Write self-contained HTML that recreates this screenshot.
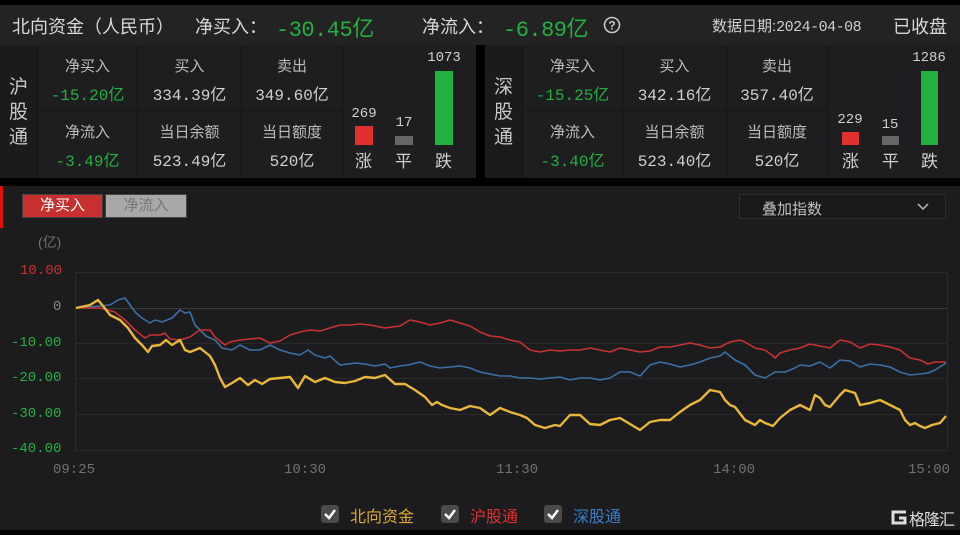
<!DOCTYPE html>
<html><head><meta charset="utf-8">
<style>
*{margin:0;padding:0;box-sizing:border-box}
body{width:960px;height:535px;background:#000;position:relative;overflow:hidden;font-family:"Liberation Sans","Noto Sans CJK SC",sans-serif;color:#c8c8c8}
.a{position:absolute;white-space:nowrap}
.hdr{left:0;top:5px;width:960px;height:40px;background:#232323}
.pn{top:45px;height:133px;background:#1e1e20}
.cell{position:absolute;width:100px;height:66px;border-right:1px solid #151515;border-bottom:1px solid #151515;text-align:center;font-size:15px}
.cell .l{position:absolute;top:10px;left:0;right:0;color:#bdbdbd}
.cell .v{position:absolute;top:36px;left:0;right:0;color:#d0d0d0;font-family:"Liberation Mono","Noto Sans CJK SC",monospace;font-size:16px;letter-spacing:0}
.g{color:#22b040 !important}
.lab{position:absolute;left:0;top:0;width:38px;height:133px;background:#1b1b1d;border-right:1px solid #151515;font-size:19px;color:#c8c8c8;line-height:25px;text-align:center;padding-top:30px}
.num{font-size:14px;color:#d0d0d0;text-align:center;width:40px;font-family:"Liberation Mono",monospace;letter-spacing:0}
.bl{font-size:17px;color:#d0d0d0}
.ax{font-family:"Liberation Mono",monospace;font-size:14px;letter-spacing:0}
.cb{position:absolute;width:18px;height:18px;background:#4a4a4a;border-radius:3px}
</style></head><body>
<div class="a hdr"></div>
<div class="a" style="left:12px;top:13px;font-size:18px;color:#d8d8d8">北向资金（人民币）</div>
<div class="a" style="left:195px;top:13px;font-size:18px;color:#d8d8d8">净买入：</div>
<div class="a" style="left:276px;top:11px;font-size:22px;color:#22b040;font-family:'Liberation Mono','Noto Sans CJK SC',monospace;letter-spacing:-0.5px">-30.45亿</div>
<div class="a" style="left:422px;top:13px;font-size:18px;color:#d8d8d8">净流入：</div>
<div class="a" style="left:503px;top:11px;font-size:22px;color:#22b040;font-family:'Liberation Mono','Noto Sans CJK SC',monospace;letter-spacing:-0.5px">-6.89亿</div>
<svg class="a" style="left:603px;top:16px" width="18" height="18"><circle cx="9" cy="9" r="7.5" fill="none" stroke="#c8c8c8" stroke-width="1.6"/><text x="9" y="13.5" font-size="12" fill="#c8c8c8" text-anchor="middle" font-family="Liberation Sans" font-weight="bold">?</text></svg>
<div class="a" style="left:712px;top:15px;font-size:15px;color:#cfcfcf">数据日期:<span style="font-family:'Liberation Mono',monospace;letter-spacing:-0.5px">2024-04-08</span></div>
<div class="a" style="left:893px;top:13px;font-size:18px;color:#d8d8d8">已收盘</div>

<div class="a pn" style="left:0;width:476px">
 <div class="lab">沪<br>股<br>通</div>
 <div class="cell" style="left:38px;top:0"><div class="l">净买入</div><div class="v g">-15.20亿</div></div>
 <div class="cell" style="left:138px;top:0;width:104px"><div class="l">买入</div><div class="v">334.39亿</div></div>
 <div class="cell" style="left:242px;top:0;width:101px"><div class="l">卖出</div><div class="v">349.60亿</div></div>
 <div class="cell" style="left:38px;top:66px;border-bottom:none"><div class="l">净流入</div><div class="v g">-3.49亿</div></div>
 <div class="cell" style="left:138px;top:66px;width:104px;border-bottom:none"><div class="l">当日余额</div><div class="v">523.49亿</div></div>
 <div class="cell" style="left:242px;top:66px;width:101px;border-bottom:none"><div class="l">当日额度</div><div class="v">520亿</div></div>
 <div class="a num" style="left:344px;top:61px">269</div>
 <div class="a" style="left:355px;top:81px;width:18px;height:19px;background:#e03030"></div>
 <div class="a num" style="left:384px;top:70px">17</div>
 <div class="a" style="left:395px;top:91px;width:18px;height:9px;background:#666"></div>
 <div class="a num" style="left:424px;top:5px">1073</div>
 <div class="a" style="left:435px;top:26px;width:18px;height:74px;background:#22b040"></div>
 <div class="a bl" style="left:355px;top:102px">涨</div>
 <div class="a bl" style="left:395px;top:102px">平</div>
 <div class="a bl" style="left:435px;top:102px">跌</div>
</div>
<div class="a pn" style="left:485px;width:475px">
 <div class="lab">深<br>股<br>通</div>
 <div class="cell" style="left:38px;top:0"><div class="l">净买入</div><div class="v g">-15.25亿</div></div>
 <div class="cell" style="left:138px;top:0;width:104px"><div class="l">买入</div><div class="v">342.16亿</div></div>
 <div class="cell" style="left:242px;top:0;width:101px"><div class="l">卖出</div><div class="v">357.40亿</div></div>
 <div class="cell" style="left:38px;top:66px;border-bottom:none"><div class="l">净流入</div><div class="v g">-3.40亿</div></div>
 <div class="cell" style="left:138px;top:66px;width:104px;border-bottom:none"><div class="l">当日余额</div><div class="v">523.40亿</div></div>
 <div class="cell" style="left:242px;top:66px;width:101px;border-bottom:none"><div class="l">当日额度</div><div class="v">520亿</div></div>
 <div class="a num" style="left:345px;top:67px">229</div>
 <div class="a" style="left:357px;top:87px;width:17px;height:13px;background:#e03030"></div>
 <div class="a num" style="left:385px;top:72px">15</div>
 <div class="a" style="left:397px;top:91px;width:17px;height:9px;background:#666"></div>
 <div class="a num" style="left:424px;top:5px">1286</div>
 <div class="a" style="left:436px;top:26px;width:17px;height:74px;background:#22b040"></div>
 <div class="a bl" style="left:357px;top:102px">涨</div>
 <div class="a bl" style="left:397px;top:102px">平</div>
 <div class="a bl" style="left:436px;top:102px">跌</div>
</div>

<div class="a" style="left:0;top:186px;width:960px;height:344px;background:#1c1c1e"></div>
<div class="a" style="left:0;top:186px;width:3px;height:42px;background:#e01010"></div>
<div class="a" style="left:22px;top:194px;width:81px;height:24px;background:#c8302f;border:1px solid #444;color:#fff;font-size:15px;text-align:center;line-height:22px">净买入</div>
<div class="a" style="left:105px;top:194px;width:82px;height:24px;background:#a8a8a8;border:1px solid #444;color:#777;font-size:15px;text-align:center;line-height:22px">净流入</div>
<div class="a" style="left:739px;top:194px;width:207px;height:25px;background:#17191b;border:1px solid #2e2e2e"></div>
<div class="a" style="left:762px;top:198px;font-size:15px;color:#c0c0c0">叠加指数</div>
<svg class="a" style="left:916px;top:202px" width="14" height="10"><path d="M2 2 L7 7 L12 2" fill="none" stroke="#aaa" stroke-width="1.6"/></svg>
<div class="a" style="left:38px;top:232px;font-size:14px;color:#707070">(亿)</div>

<div class="a ax" style="left:20px;top:263px;color:#c83030">10.00</div>
<div class="a ax" style="left:53px;top:299px;color:#888">0</div>
<div class="a ax" style="left:11px;top:335px;color:#22b040">-10.00</div>
<div class="a ax" style="left:11px;top:370px;color:#22b040">-20.00</div>
<div class="a ax" style="left:11px;top:406px;color:#22b040">-30.00</div>
<div class="a ax" style="left:11px;top:441px;color:#22b040">-40.00</div>
<div class="a ax" style="left:53px;top:462px;color:#707070">09:25</div>
<div class="a ax" style="left:284px;top:462px;color:#707070">10:30</div>
<div class="a ax" style="left:496px;top:462px;color:#707070">11:30</div>
<div class="a ax" style="left:713px;top:462px;color:#707070">14:00</div>
<div class="a ax" style="left:908px;top:462px;color:#707070">15:00</div>

<svg class="a" style="left:0;top:0" width="960" height="535">
<g stroke="#2a2a2c" stroke-width="1">
<line x1="75" y1="272.5" x2="947" y2="272.5"/>
<line x1="75" y1="343.5" x2="947" y2="343.5"/>
<line x1="75" y1="378.5" x2="947" y2="378.5"/>
<line x1="75" y1="414.5" x2="947" y2="414.5"/>
<line x1="75" y1="450.5" x2="947" y2="450.5"/>
<line x1="75.5" y1="272" x2="75.5" y2="451"/>
<line x1="947.5" y1="272" x2="947.5" y2="451"/>
</g>
<line x1="75" y1="308.5" x2="947" y2="308.5" stroke="#3a3a3c"/>
<polyline fill="none" stroke="#3d6fa8" stroke-width="1.6" stroke-linejoin="round" points="76,308 100,306 110,305 118,300 125,298 130,305 136,313 142,318 150,323 155,320 162,322 172,318 180,310 185,313 190,312 195,325 200,330 206,336 210,338 215,340 222,348 232,350 240,345 250,350 260,350 270,345 280,350 290,353 300,355 308,350 315,355 325,358 330,356 340,365 348,364 355,363 365,364 375,366 385,364 390,368 400,366 408,365 420,362 430,366 440,368 450,367 460,366 470,368 480,372 490,374 500,376 510,376 520,378 530,378 540,379 550,378 560,377 570,380 580,378 590,378 600,380 610,378 620,372 630,372 640,376 650,365 660,362 670,364 680,367 690,365 700,362 710,358 720,356 725,352 735,360 745,365 755,375 765,378 775,372 785,372 795,368 800,365 810,366 820,362 830,368 840,360 850,361 860,367 870,364 880,365 890,367 900,372 910,375 920,374 928,373 935,370 946,363"/>
<polyline fill="none" stroke="#c83232" stroke-width="1.6" stroke-linejoin="round" points="76,308 100,308 115,312 125,320 135,330 145,338 150,335 160,335 165,333 170,339 180,340 190,337 200,330 210,330 215,337 225,345 230,342 240,340 250,339 260,338 270,343 280,341 290,335 300,332 310,330 320,331 330,328 340,325 350,325 360,324 370,325 385,328 400,326 410,320 420,322 430,325 440,323 450,320 460,323 470,326 480,332 490,336 500,337 510,340 520,342 530,350 540,352 550,350 560,351 570,350 580,350 590,348 600,350 610,352 620,348 630,350 640,352 650,351 660,347 670,347 680,345 690,343 700,345 710,348 720,347 730,342 740,340 745,342 755,348 765,350 772,355 775,358 780,353 790,350 800,348 810,344 820,346 830,348 840,340 850,342 860,348 870,344 880,345 890,347 900,350 910,358 920,360 928,364 935,362 946,362"/>
<polyline fill="none" stroke="#e8b63a" stroke-width="2.4" stroke-linejoin="round" points="76,308 90,305 98,300 103,306 110,315 120,320 128,328 135,338 142,345 148,352 152,346 160,345 166,340 172,345 180,340 185,350 190,352 200,348 210,356 215,365 220,378 225,387 232,383 240,378 248,385 255,380 262,384 270,379 280,378 290,377 298,388 305,376 315,382 325,378 335,382 345,383 355,381 365,377 375,378 385,375 395,384 405,384 415,390 425,397 432,405 437,402 442,405 450,408 460,410 470,406 480,408 490,415 500,408 510,412 520,415 527,418 535,425 545,428 555,425 560,426 570,415 580,415 590,424 600,425 610,420 620,418 630,424 640,430 650,422 660,420 670,420 680,412 690,405 700,400 710,390 720,392 725,400 730,405 735,407 745,420 755,425 760,420 765,423 773,426 780,418 790,410 800,405 810,410 815,395 820,398 825,405 830,407 840,395 845,390 855,393 860,405 870,403 880,400 890,405 900,410 905,420 910,425 915,423 920,426 925,428 932,425 940,423 946,416"/>
</svg>

<div class="cb" style="left:321px;top:505px"></div>
<svg class="a" style="left:321px;top:505px" width="18" height="18"><path d="M4 9 L8 13 L14 5" fill="none" stroke="#fff" stroke-width="2.4"/></svg>
<div class="a" style="left:350px;top:503px;font-size:16px;color:#d9a934">北向资金</div>
<div class="cb" style="left:441px;top:505px"></div>
<svg class="a" style="left:441px;top:505px" width="18" height="18"><path d="M4 9 L8 13 L14 5" fill="none" stroke="#fff" stroke-width="2.4"/></svg>
<div class="a" style="left:470px;top:503px;font-size:16px;color:#e03030">沪股通</div>
<div class="cb" style="left:544px;top:505px"></div>
<svg class="a" style="left:544px;top:505px" width="18" height="18"><path d="M4 9 L8 13 L14 5" fill="none" stroke="#fff" stroke-width="2.4"/></svg>
<div class="a" style="left:573px;top:503px;font-size:16px;color:#3a7fc8">深股通</div>

<svg class="a" style="left:890px;top:509px" width="18" height="17"><path d="M16 3 H3 V14 H15 V9 H9" fill="none" stroke="#ddd" stroke-width="3"/></svg>
<div class="a" style="left:909px;top:506px;font-size:16px;color:#ddd;letter-spacing:-1px">格隆汇</div>
<div class="a" style="left:0;top:530px;width:960px;height:5px;background:#000"></div>
</body></html>
